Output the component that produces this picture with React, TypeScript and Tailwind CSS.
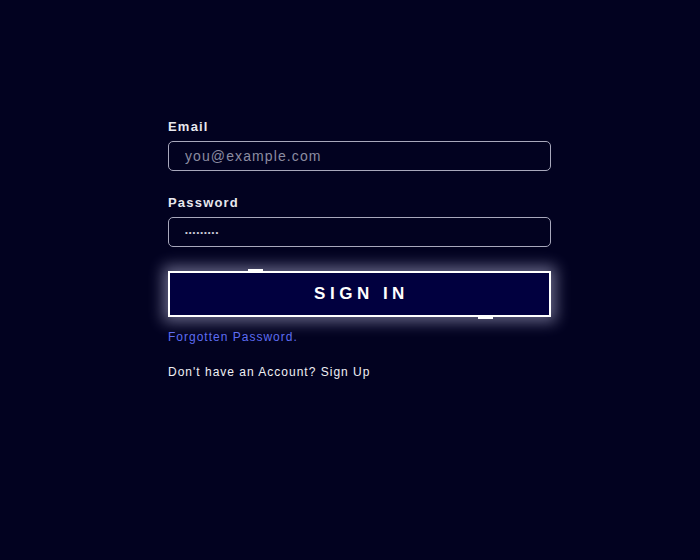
import { useState } from "react";

const App = () => {
  const [email, setEmail] = useState("");
  const [password, setPassword] = useState("password1");

  return (
    <div className="min-h-[560px] w-full bg-[#020220] font-['Liberation_Sans',Arial,sans-serif] tracking-[1px] text-white">
      <div className="ml-[168px] flex w-[383px] flex-col pt-[119px]">
        <label className="text-[13px] leading-[16px] font-semibold tracking-[1.2px] text-[#e8e8ee]">Email</label>
        <input
          type="email"
          value={email}
          onChange={(e) => setEmail(e.target.value)}
          placeholder="you@example.com"
          className="mt-[6px] h-[30px] w-full rounded-[5px] border border-[#a8a8bc] bg-transparent px-4 text-[14px] tracking-[1.1px] text-white outline-none placeholder:text-[#8c8ca0]"
        />
        <label className="mt-[24px] text-[13px] leading-[16px] font-semibold tracking-[1.2px] text-[#e8e8ee]">Password</label>
        <input
          type="password"
          value={password}
          onChange={(e) => setPassword(e.target.value)}
          className="mt-[6px] h-[30px] w-full rounded-[5px] border border-[#a8a8bc] bg-transparent px-4 text-[8px] tracking-[1px] text-[#d0d0dc] outline-none"
        />
        <div className="relative mt-[24px]">
          <button className="h-[46px] w-full border-2 border-white bg-[#01003f] pl-[4px] text-[17px] font-bold tracking-[4.5px] text-white shadow-[0_0_14px_5px_rgba(220,220,255,0.45)]">
            SIGN IN
          </button>
          <span className="absolute left-[80px] top-[-2px] h-[2px] w-[15px] bg-white" />
          <span className="absolute right-[58px] bottom-[-2px] h-[2px] w-[15px] bg-white" />
        </div>
        <a href="#" className="mt-[12px] text-[12px] leading-[16px] text-[#5d6cf2]">
          Forgotten Password.
        </a>
        <p className="mt-[19px] text-[12px] leading-[16px] text-[#f0f0f4]">
          Don't have an Account? Sign Up
        </p>
      </div>
    </div>
  );
};

export default App;
